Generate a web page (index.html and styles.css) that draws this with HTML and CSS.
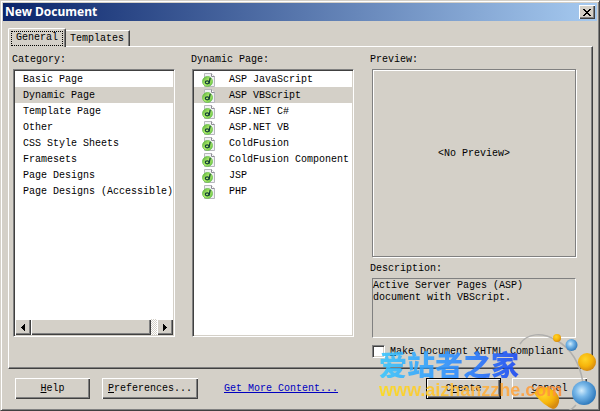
FILE: index.html
```html
<!DOCTYPE html>
<html lang="en">
<head>
<meta charset="utf-8">
<title>New Document</title>
<link rel="stylesheet" href="styles.css">
</head>
<body>
<svg class="defs" aria-hidden="true">
  <defs>
    <linearGradient id="disc" x1="0" y1="0" x2="1" y2="1">
      <stop offset="0" stop-color="#4fa838"/><stop offset=".5" stop-color="#b4f06c"/><stop offset="1" stop-color="#5aba40"/>
    </linearGradient>
    <symbol id="file" viewBox="0 0 14 14">
      <path d="M2.500.5h7l3 3v10h-10z" fill="#f1f1f4" stroke="#b7b7bd"/>
      <path d="M9.500.5v3h3" fill="#fff" stroke="#8e8e96"/>
      <circle cx="5.500" cy="8.500" r="5" fill="url(#disc)" stroke="#6abf4c" stroke-width=".8"/>
      <path d="M8.200 4.800 7 10.500" fill="none" stroke="#123f37" stroke-width="1.300"/>
      <ellipse cx="5.200" cy="9.300" rx="1.900" ry="1.500" fill="none" stroke="#123f37" stroke-width="1.200"/>
    </symbol>
  </defs>
</svg>
<main class="window">
  <header class="titlebar">
    <h1>New Document</h1>
    <button class="close" aria-label="Close"><svg width="8" height="7" viewBox="0 0 8 7" shape-rendering="crispEdges"><path d="M0 0h2v1h1v1h2V1h1V0h2v1H7v1H6v1H5v1h1v1h1v1h1v1H6V6H5V5H3v1H2v1H0V6h1V5h1V4h1V3H2V2H1V1H0z"/></svg></button>
  </header>
  <div class="body">
    <div class="tabs" role="tablist">
      <button class="tab active" role="tab" aria-selected="true"><span>General</span></button>
      <button class="tab" role="tab" aria-selected="false"><span>Templates</span></button>
    </div>
    <section class="panel" role="tabpanel">
      <div class="column">
        <h2>Category:</h2>
        <div class="list">
          <ul>
            <li><button>Basic Page</button></li>
            <li><button class="selected">Dynamic Page</button></li>
            <li><button>Template Page</button></li>
            <li><button>Other</button></li>
            <li><button>CSS Style Sheets</button></li>
            <li><button>Framesets</button></li>
            <li><button>Page Designs</button></li>
            <li><button>Page Designs (Accessible)</button></li>
          </ul>
          <div class="scrollbar">
            <button class="raised arrow" aria-label="Scroll left"><svg width="4" height="7" viewBox="0 0 4 7" shape-rendering="crispEdges"><path d="M4 0v7H3V6H2V5H1V4H0V3h1V2h1V1h1V0z"/></svg></button>
            <div class="track"><div class="raised thumb"></div></div>
            <button class="raised arrow" aria-label="Scroll right"><svg width="4" height="7" viewBox="0 0 4 7" shape-rendering="crispEdges"><path d="M0 0v7h1V6h1V5h1V4h1V3H3V2H2V1H1V0z"/></svg></button>
          </div>
        </div>
      </div>
      <div class="column">
        <h2>Dynamic Page:</h2>
        <div class="list files">
          <ul>
            <li><button><svg><use href="#file"/></svg>ASP JavaScript</button></li>
            <li><button class="selected"><svg><use href="#file"/></svg>ASP VBScript</button></li>
            <li><button><svg><use href="#file"/></svg>ASP.NET C#</button></li>
            <li><button><svg><use href="#file"/></svg>ASP.NET VB</button></li>
            <li><button><svg><use href="#file"/></svg>ColdFusion</button></li>
            <li><button><svg><use href="#file"/></svg>ColdFusion Component</button></li>
            <li><button><svg><use href="#file"/></svg>JSP</button></li>
            <li><button><svg><use href="#file"/></svg>PHP</button></li>
          </ul>
        </div>
      </div>
      <div class="column details">
        <h2>Preview:</h2>
        <div class="preview">&lt;No Preview&gt;</div>
        <h2>Description:</h2>
        <p class="description">Active Server Pages (ASP) document with VBScript.</p>
        <label class="check"><input type="checkbox"><span><u>M</u>ake Document XHTML Compliant</span></label>
      </div>
    </section>
    <footer class="actions">
      <button class="raised action"><span><u>H</u>elp</span></button>
      <button class="raised action wide"><span><u>P</u>references...</span></button>
      <a href="#more">Get More Content...</a>
      <button class="raised action default"><span>C<u>r</u>eate</span></button>
      <button class="raised action"><span><u>C</u>ancel</span></button>
    </footer>
  </div>
  <svg class="orbit" width="100" height="86" viewBox="500 325 100 86" aria-hidden="true">
    <defs>
      <radialGradient id="gold" cx=".4" cy=".35" r=".65"><stop offset="0" stop-color="#ffd529"/><stop offset=".6" stop-color="#f6b40b"/><stop offset="1" stop-color="#d68a10"/></radialGradient>
      <radialGradient id="blue" cx=".4" cy=".4" r=".65"><stop offset="0" stop-color="#d3edfc"/><stop offset=".4" stop-color="#78b8e9"/><stop offset="1" stop-color="#2874b9"/></radialGradient>
    </defs>
    <path d="M520 344C527 333 542 332 556 340 572 349 580 363 583 383" fill="none" stroke="#b0afad" stroke-width="1.500"/>
    <path d="M552 411C561 414 570 412 576 405" fill="none" stroke="#b0afad" stroke-width="1.500"/>
    <circle cx="557" cy="338" r="4" fill="url(#gold)"/>
    <circle cx="571.500" cy="345" r="6" fill="url(#blue)"/>
    <circle cx="587" cy="362" r="9" fill="url(#gold)"/>
    <path d="M534 393C538 387 546 386 551 389 557 392 560 397 559 402 558 406 556 409 553 409 549 408 539 401 534 393z" fill="url(#gold)"/>
    <circle cx="584" cy="393" r="12" fill="url(#blue)"/>
  </svg>
  <div class="mark">
    <div class="mark-name" lang="zh">爱站者之家</div>
    <div class="mark-url">www.aizhanzzhe.com</div>
  </div>
</main>
</body>
</html>
```
FILE: styles.css
```css
* { box-sizing: border-box; }
body {
  margin: 0;
  background: #d4d0c8;
  color: #000;
  font: 10px/12px "Liberation Mono", "Noto Sans CJK SC", monospace;
}
button { margin: 0; padding: 0; border: 0; background: #d4d0c8; color: inherit; font: inherit; }
h1, h2, p, ul { margin: 0; padding: 0; }
svg { display: block; }
.defs { position: absolute; width: 0; height: 0; }

.window {
  position: relative;
  display: flex;
  flex-direction: column;
  min-height: 100vh;
  border: 1px solid #d4d0c8;
  border-right-color: #404040;
  border-bottom-color: #404040;
  padding: 1px;
  box-shadow: inset 1px 1px #fff, inset -1px -1px #808080;
  overflow: hidden;
}
.titlebar {
  display: flex;
  align-items: center;
  justify-content: space-between;
  height: 18px;
  margin: 1px;
  padding: 0 2px;
  background: linear-gradient(to right, #0a246a, #a6caf0);
  color: #fff;
}
.titlebar h1 { font: bold 12px/16px "Noto Sans", sans-serif; }
.close {
  display: grid;
  place-items: center;
  width: 16px;
  height: 14px;
  box-shadow: inset 1px 1px #fff, inset -1px -1px #404040, inset -2px -2px #808080;
}
.body { display: flex; flex: 1; flex-direction: column; padding: 6px 5px 6px 6px; }
.tabs { display: flex; align-items: flex-end; }
.tab {
  height: 16px;
  padding: 0 5px 0 4px;
  border-top: 1px solid #fff;
  border-right: 1px solid #404040;
  box-shadow: inset -1px 0 #808080;
}
.tab.active {
  z-index: 1;
  height: 19px;
  margin-bottom: -1px;
  padding: 2px;
  border-left: 1px solid #fff;
  border-radius: 2px 2px 0 0;
}
.tab.active span { display: block; padding: 0 4px 1px; border: 1px dotted #000; }

.panel {
  display: grid;
  flex: 1;
  grid-template-columns: 163fr 163fr 206fr;
  gap: 16px;
  padding: 6px 16px 31px 3px;
  border: 1px solid #fff;
  border-right-color: #404040;
  border-bottom-color: #404040;
  box-shadow: inset -1px -1px #808080;
}
.column { display: flex; flex-direction: column; min-width: 0; }
h2 { font: inherit; line-height: 14px; margin-bottom: 2px; }
.list {
  display: flex;
  flex: 1;
  flex-direction: column;
  justify-content: space-between;
  margin-left: 1px;
  border: 1px solid #808080;
  border-right-color: #fff;
  border-bottom-color: #fff;
  padding: 1px;
  background: #fff;
  box-shadow: inset 1px 1px #404040, inset -1px -1px #d4d0c8;
}
.list ul { list-style: none; }
.list li button {
  display: flex;
  align-items: center;
  width: 100%;
  height: 16px;
  padding: 2px 0 0 8px;
  background: none;
  text-align: left;
  white-space: nowrap;
}
.list li .selected { background: #d4d0c8; }
.files svg { width: 14px; height: 14px; margin: 0 13px 0 0; }
.scrollbar { display: flex; height: 16px; }
.raised {
  background: #d4d0c8;
  box-shadow: inset 1px 1px #fff, inset -1px -1px #404040, inset -2px -2px #808080;
}
.arrow { display: grid; place-items: center; width: 16px; }
.track { flex: 1; background: repeating-conic-gradient(#fff 0 25%, #d4d0c8 0 50%) 0 0 / 2px 2px; }
.thumb { width: 95%; height: 100%; }

.details { margin-bottom: -21px; }
.preview {
  display: grid;
  flex: 1;
  place-items: center;
  margin: 0 0 5px 2px;
  padding-bottom: 18px;
  border: 1px solid #808080;
  box-shadow: inset 1px 1px #fff, 1px 1px #fff;
}
.description {
  height: 60px;
  margin-left: 2px;
  padding: 1px 32px 0 0;
  border: 1px solid #808080;
  border-right-color: #fff;
  border-bottom-color: #fff;
}
.check { display: flex; align-items: center; gap: 5px; margin: 7px 0 0 2px; height: 13px; white-space: nowrap; }
.check input {
  appearance: none;
  width: 13px;
  height: 13px;
  margin: 0;
  border: 1px solid #808080;
  border-right-color: #fff;
  border-bottom-color: #fff;
  background: #fff;
  box-shadow: inset 1px 1px #404040, inset -1px -1px #d4d0c8;
}

.actions { display: flex; align-items: center; padding: 9px 6px 4px 7px; }
.action { width: 75px; height: 21px; }
.action.wide { width: 96px; margin: 0 26px 0 12px; }
.action.default {
  margin: 0 11px 0 auto;
  border: 1px solid #000;
}
.actions a { color: #0000c0; }

.mark { position: absolute; right: 28px; bottom: 8px; width: 192px; opacity: .88; }
.mark-name {
  width: max-content;
  background: linear-gradient(to right, #38c8ff, #2a86ff 60%, #1846f4);
  background-clip: text;
  color: transparent;
  font: 900 28px/28px "Noto Sans CJK SC", sans-serif;
}
.mark-url {
  background: linear-gradient(to right, #ffdc14, #ffb53c 50%, #ff8b3c);
  background-clip: text;
  color: transparent;
  font: bold 18px/24px "Liberation Sans", sans-serif;
}
.orbit { position: absolute; right: 0; bottom: 0; margin: 0 -1px -1px 0; }
```
